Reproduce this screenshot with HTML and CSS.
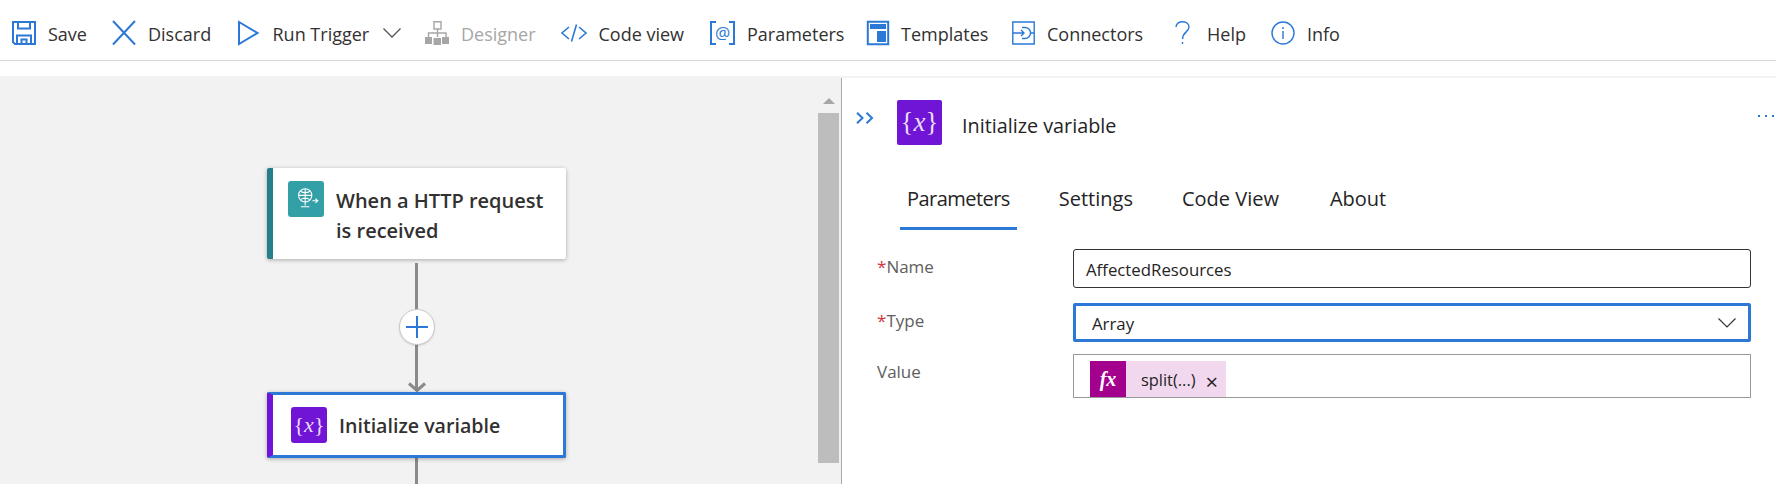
FILE: index.html
```html
<!DOCTYPE html>
<html lang="en">
<head>
<meta charset="utf-8">
<title>Logic App Designer</title>
<link rel="stylesheet" href="styles.css">
</head>
<body>
<div class="app">
  <header class="toolbar">
    <button class="tool tool-save"><svg class="ico w24" viewBox="0 0 24 24"><path d="M1 1H23V23H3L1 21Z M6 1V7.5H18V1 M5 23V14.5H19V23 M9.5 23V18.5H14.5V23"/></svg><span>Save</span></button>
    <button class="tool tool-discard"><svg class="ico w24" viewBox="0 0 24 24"><path d="M1 0L23 23.5M23 0L1 23.5"/></svg><span>Discard</span></button>
    <button class="tool tool-run"><svg class="ico w21" viewBox="0 0 21 24"><path d="M1 1L19.5 12L1 23Z"/></svg><span>Run Trigger</span><svg class="chev" viewBox="0 0 18 10"><path d="M0.5 0.5L9 9L17.5 0.5"/></svg></button>
    <button class="tool tool-designer disabled"><svg class="ico w24 grey" viewBox="0 0 24 24"><path class="thin" d="M9 0.8H16V8H9Z"/><path class="thin" d="M12.5 8V12M3.5 16V12H21V16M12.5 12V16"/><path class="solid" d="M0 16H7V23H0ZM8.5 17H16V24H8.5ZM17 16H24V23H17Z"/></svg><span>Designer</span></button>
    <button class="tool tool-code"><svg class="ico w26" viewBox="0 0 26 24"><path class="mid" d="M8 6L1 12L8 18M18 6L25 12L18 18M15.5 3.5L10.5 20.5"/></svg><span>Code view</span></button>
    <button class="tool tool-params"><svg class="ico w25" viewBox="0 0 25 24"><path d="M6 1H1V23H6M19 1H24V23H19"/><text x="12.5" y="17.5" class="at">@</text></svg><span>Parameters</span></button>
    <button class="tool tool-templates"><svg class="ico w22" viewBox="0 0 22 24"><path d="M0.8 0.8H21.2V23.2H0.8Z"/><path class="solid" d="M3 3H19V8H3ZM10 10H19V21H10Z"/></svg><span>Templates</span></button>
    <button class="tool tool-connectors"><svg class="ico w23" viewBox="0 0 23 24"><path class="thin" d="M0.8 1H22.2V23H0.8Z"/><path class="thin" d="M1 12H12M9 9L12 12L9 15M10 6.5H13A5.5 5.5 0 0 1 13 17.5H10M18 12H22"/></svg><span>Connectors</span></button>
    <button class="tool tool-help"><svg class="ico w15" viewBox="0 0 15 24"><path class="thin" d="M1 6C1 -1 14 -1 14 6C14 11 7.5 11 7.5 18"/><path class="thin" d="M7.5 21V23"/></svg><span>Help</span></button>
    <button class="tool tool-info"><svg class="ico w24" viewBox="0 0 24 24"><circle class="thin" cx="12" cy="12" r="11"/><path class="thin" d="M12 10V18M12 6V8"/></svg><span>Info</span></button>
  </header>
  <div class="strip"></div>
  <main class="main">
    <section class="canvas">
      <div class="node node-http">
        <span class="node-icon icon-teal">
          <svg class="globe" viewBox="0 0 20 20"><circle cx="8.5" cy="7" r="5.5"/><path d="M3 7H14M8.5 1.5V12.5M4.5 3.5C7 5 10 5 12.5 3.5M4.5 10.5C7 9 10 9 12.5 10.5M8.5 12.5V15.5M5 16.5H12M14.5 11.5H19M17 9.8L19 11.5L17 13.2"/></svg>
        </span>
        <span class="node-title">When a HTTP request<br>is received</span>
      </div>
      <div class="edge edge-a"></div>
      <div class="edge edge-b"></div>
      <div class="edge edge-c"></div>
      <svg class="arrowhead" viewBox="0 0 18 10"><path d="M1 1.5L9 8.5L17 1.5"/></svg>
      <div class="add"><svg viewBox="0 0 22 22"><path d="M0 11H22M11 0V22"/></svg></div>
      <div class="node node-var">
        <span class="node-icon icon-purple"><span class="brace">{<i>x</i>}</span></span>
        <span class="node-title">Initialize variable</span>
      </div>
      <div class="scroll-up"></div>
      <div class="scroll-thumb"></div>
    </section>
    <aside class="panel">
      <div class="panel-head">
        <svg class="collapse" viewBox="0 0 18 12"><path d="M1 0.8L6.5 6L1 11.2M10.5 0.8L16 6L10.5 11.2"/></svg>
        <span class="panel-icon"><span class="brace">{<i>x</i>}</span></span>
        <span class="panel-title">Initialize variable</span>
        <span class="more"><b></b><b></b><b></b></span>
      </div>
      <nav class="tabs">
        <span class="tab active">Parameters</span>
        <span class="tab">Settings</span>
        <span class="tab">Code View</span>
        <span class="tab tab-about">About</span>
      </nav>
      <form class="form">
        <label class="label label-name"><em>*</em>Name</label>
        <div class="field field-name">AffectedResources</div>
        <label class="label label-type"><em>*</em>Type</label>
        <div class="field field-type"><span class="type-value">Array</span><svg class="drop" viewBox="0 0 18 10"><path d="M0.5 0.5L9 9L17.5 0.5"/></svg></div>
        <label class="label label-value">Value</label>
        <div class="field field-value"><span class="chip"><span class="chip-fx">fx</span><span class="chip-text">split(...)</span><span class="chip-x">×</span></span></div>
      </form>
    </aside>
  </main>
</div>
</body>
</html>
```
FILE: styles.css
```css
* { box-sizing: border-box; }
html, body { margin: 0; padding: 0; background: #fff; }
body { font-family: "Open Sans", "Noto Sans", sans-serif; color: #323130; overflow: hidden; }
.app { width: 1776px; height: 484px; display: flex; flex-direction: column; overflow: hidden; }

/* toolbar */
.toolbar { height: 61px; flex: none; display: flex; align-items: center; padding: 6px 0 0 12px; border-bottom: 1px solid #d8d8d8; }
.tool { display: flex; align-items: center; gap: 12px; border: 0; padding: 0; margin: 0; background: none; font: inherit; font-size: 18px; color: #323130; line-height: 24px; white-space: nowrap; }
.tool span { padding-top: 2px; }
.tool-save { width: 100px; }
.tool-discard { width: 125.5px; }
.tool-run { width: 187.5px; gap: 14px; }
.tool-designer { width: 135.5px; }
.tool-code { width: 149.5px; }
.tool-params { width: 157px; }
.tool-templates { width: 145px; }
.tool-connectors { width: 163px; }
.tool-help { width: 96px; gap: 17px; }
.disabled { color: #a6a6a6; }
.ico { height: 24px; flex: none; fill: none; stroke: #2b78d6; stroke-width: 2; overflow: visible; }
.w15 { width: 15px; } .w21 { width: 21px; } .w22 { width: 22px; } .w23 { width: 23px; } .w24 { width: 24px; } .w25 { width: 25px; } .w26 { width: 26px; }
.ico .thin { stroke-width: 1.4; }
.ico .mid { stroke-width: 1.6; }
.ico .solid { fill: #2b78d6; stroke: none; }
.ico.grey { stroke: #a6a6a6; }
.ico.grey .solid { fill: #a6a6a6; }
.ico .at { font-family: "Open Sans", sans-serif; font-size: 17px; fill: #2b78d6; stroke: none; text-anchor: middle; }
.chev { width: 18px; height: 10px; margin-left: 0; fill: none; stroke: #555; stroke-width: 1.3; }
.strip { height: 15px; flex: none; }

/* main */
.main { flex: 1; display: flex; min-height: 0; }
.canvas { width: 841px; flex: none; position: relative; background: #f2f2f2; overflow: hidden; }

/* diagram */
.node { position: absolute; left: 267px; width: 299px; display: flex; background: #fff; border-radius: 2px; font-weight: 600; font-size: 20px; color: #323130; box-shadow: 0 1px 4px rgba(0,0,0,.3); }
.node-http { top: 92px; height: 91px; border-left: 6px solid #257f8b; padding: 13px 0 0 15px; gap: 12px; }
.node-var { top: 316px; height: 66px; border: 3px solid #2b78d6; border-left: 6px solid #7014d6; padding: 12px 0 0 18px; gap: 12px; align-items: flex-start; }
.node-icon { width: 36px; height: 36px; flex: none; border-radius: 3px; display: flex; align-items: center; justify-content: center; color: #fff; }
.icon-teal { background: #33a0a8; }
.icon-purple { background: #7014d6; }
.node-title { line-height: 30px; white-space: nowrap; }
.node-http .node-title { padding-top: 5px; }
.node-var .node-title { line-height: 36px; font-size: 19.6px; padding-top: 1px; }
.globe { width: 24px; height: 24px; margin-left: 2px; fill: none; stroke: #fff; stroke-width: .9; }
.brace { font-family: "Liberation Serif", serif; font-weight: 400; font-size: 22px; line-height: 1; color: #e9dcf9; }
.edge { position: absolute; left: 415px; width: 3px; background: #8a8a8a; }
.edge-a { top: 187px; height: 48px; }
.edge-b { top: 268px; height: 47px; }
.edge-c { top: 382px; height: 26px; }
.arrowhead { position: absolute; left: 408px; top: 306px; width: 18px; height: 10px; fill: none; stroke: #8a8a8a; stroke-width: 3; }
.add { position: absolute; left: 399px; top: 233px; width: 36px; height: 36px; border-radius: 50%; background: #fff; border: 1px solid #c8c8c8; box-shadow: 0 1px 2px rgba(0,0,0,.12); display: flex; align-items: center; justify-content: center; }
.add svg { width: 22px; height: 22px; fill: none; stroke: #2b78d6; stroke-width: 2; }
.scroll-up { position: absolute; left: 823px; top: 22px; width: 0; height: 0; border-left: 6px solid transparent; border-right: 6px solid transparent; border-bottom: 6px solid #a6a6a6; }
.scroll-thumb { position: absolute; left: 818px; top: 37px; width: 21px; height: 350px; background: #bdbdbd; }

/* panel */
.panel { flex: 1; min-width: 0; border-left: 1px solid #a9a9a9; position: relative; background: #fff; }
.panel::before { content: ""; display: block; height: 2px; background: #f2f2f2; margin-left: -1px; }
.panel-head { height: 92px; display: flex; align-items: flex-start; padding-top: 22px; }
.collapse { width: 18px; height: 12px; margin: 12px 0 0 14px; flex: none; fill: none; stroke: #2b78d6; stroke-width: 2; }
.panel-icon { width: 45px; height: 45px; margin-left: 23px; flex: none; border-radius: 2px; background: #7014d6; display: flex; align-items: center; justify-content: center; }
.panel-icon .brace { font-size: 27px; }
.panel-title { margin-left: 20px; font-size: 19.8px; line-height: 52px; color: #242424; white-space: nowrap; }
.more { display: flex; gap: 5px; margin-left: auto; margin-top: 15px; padding-right: 2px; }
.more b { width: 2px; height: 2px; background: #2b78d6; }
.tabs { height: 60px; display: flex; padding-left: 58px; gap: 35px; }
.tab { padding: 15px 7px 0; font-size: 20px; line-height: 28px; color: #242424; border-bottom: 3px solid transparent; white-space: nowrap; }
.tab.active { border-bottom-color: #2b78d6; letter-spacing: -.55px; }
.tab-about { margin-left: 2px; }
.form { display: grid; grid-template-columns: 196px 678px; padding: 19px 0 0 35px; grid-template-rows: 39px 39px 44px; row-gap: 15px; align-items: start; }
.label { font-size: 17px; line-height: 24px; color: #605e5c; padding-top: 6px; }
.label em { font-style: normal; color: #d13438; margin-right: 0; }
.label-value { margin-top: -3px; }
.field { font-size: 16.8px; color: #242424; background: #fff; white-space: nowrap; }
.field-name { height: 39px; line-height: 39px; border: 1px solid #333; border-radius: 3px; padding-left: 12px; }
.field-type { height: 39px; border: 3px solid #2b78d6; border-radius: 2px; padding-left: 16px; display: flex; justify-content: space-between; align-items: center; padding-right: 12px; }
.type-value { padding-top: 2px; }
.field-value { height: 44px; margin-top: -3px; border: 1px solid #999; padding: 6px 0 0 16px; }
.drop { width: 18px; height: 10px; fill: none; stroke: #333; stroke-width: 1.2; }
.chip { display: inline-flex; height: 36px; background: #f2d8ee; align-items: center; width: 136px; }
.chip-fx { width: 36px; height: 36px; background: #a4008e; color: #fff; font-family: "Liberation Serif", serif; font-style: italic; font-weight: 700; font-size: 20px; line-height: 36px; text-align: center; }
.chip-text { margin-left: 15px; font-size: 16.4px; padding-top: 1px; }
.chip-x { margin-left: 10px; font-size: 22px; line-height: 22px; padding-top: 3px; }
```
